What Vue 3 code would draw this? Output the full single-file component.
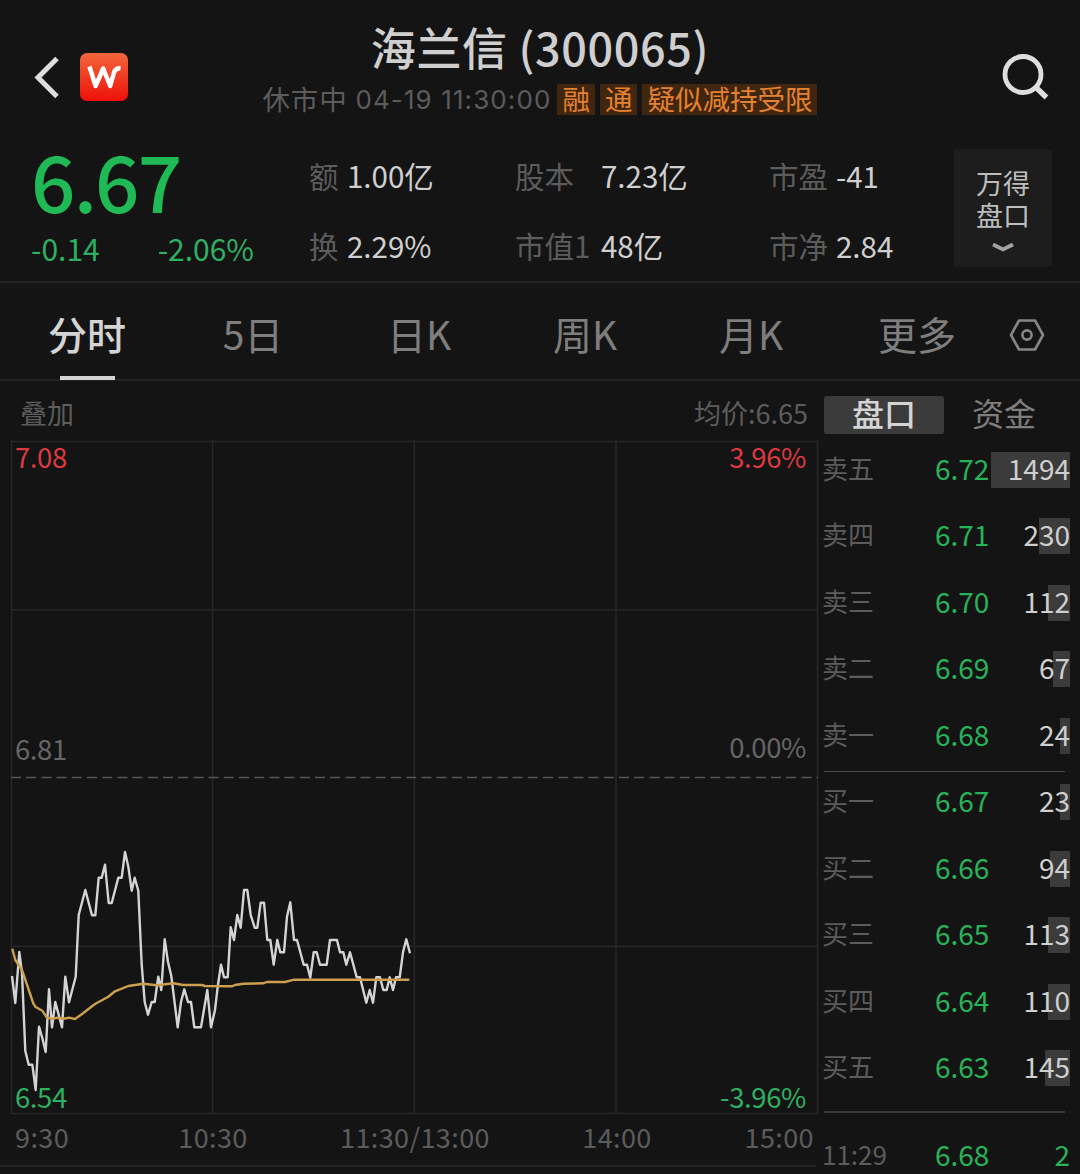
<template>
  <div class="page">
    <header class="header">
      <div class="header-left">
        <svg class="back" viewBox="0 0 26 44" width="26" height="44">
          <path d="M24 2.5 L5 21.5 L24 40.5" fill="none" stroke="#dedede" stroke-width="5" />
        </svg>
        <div class="logo">
          <svg viewBox="0 0 48 48" width="48" height="48">
            <path
              d="M9.5 13.5 L15.6 33 L23.2 15.5 L30.2 33 L34 19.5 Q35.4 14.8 40.5 15.2"
              fill="none"
              stroke="#fff"
              stroke-width="4.5"
              stroke-linejoin="round"
            />
          </svg>
        </div>
      </div>
      <div class="header-center">
        <h1 class="title">海兰信 (300065)</h1>
        <div class="subtitle">
          <span class="status">休市中</span>
          <span class="datetime">04-19 11:30:00</span>
          <span v-for="tag in tags" :key="tag" class="tag">{{ tag }}</span>
        </div>
      </div>
      <svg class="search" viewBox="0 0 48 48" width="48" height="48">
        <circle cx="21" cy="21.5" r="18" fill="none" stroke="#dedede" stroke-width="4.8" />
        <path d="M33.5 34 L44.5 44.5" stroke="#dedede" stroke-width="5.4" />
      </svg>
    </header>

    <section class="quote">
      <div class="price-box">
        <div class="price">6.67</div>
        <div class="change">
          <span>-0.14</span>
          <span>-2.06%</span>
        </div>
      </div>
      <div v-for="(col, i) in stats" :key="i" class="stat-col" :class="`col-${i}`">
        <div v-for="item in col" :key="item.label" class="stat">
          <span class="stat-label">{{ item.label }}</span>
          <span class="stat-value">{{ item.value }}</span>
        </div>
      </div>
      <div class="wind">
        <div class="wind-text">万得<br />盘口</div>
        <svg viewBox="0 0 22 12" width="22" height="12">
          <path d="M1 2.5 L11 7.5 L21 2.5" fill="none" stroke="#a2a2a2" stroke-width="3.8" />
        </svg>
      </div>
    </section>

    <nav class="tabs">
      <div
        v-for="tab in tabs"
        :key="tab"
        class="tab"
        :class="{ active: tab === activeTab }"
        @click="activeTab = tab"
      >
        <span>{{ tab }}</span>
      </div>
      <svg class="settings" viewBox="0 0 36 34" width="36" height="34">
        <path
          d="M10 2.5 H26 L34 17 L26 31.5 H10 L2 17 Z"
          fill="none"
          stroke="#868686"
          stroke-width="2.6"
          stroke-linejoin="round"
        />
        <circle cx="18" cy="17" r="4.6" fill="none" stroke="#868686" stroke-width="2.6" />
      </svg>
    </nav>

    <main class="main">
      <section class="chart-panel">
        <div class="chart-head">
          <span>叠加</span>
          <span>均价:6.65</span>
        </div>
        <div class="chart">
          <svg class="plot" viewBox="0 438 820 680" width="820" height="680">
            <g stroke="#272727" stroke-width="1.6">
              <line v-for="x in gridX" :key="'x' + x" :x1="x" y1="440" :x2="x" y2="1114" />
              <line v-for="y in gridY" :key="'y' + y" x1="11" :y1="y" x2="818" :y2="y" />
            </g>
            <line x1="11" y1="777.5" x2="818" y2="777.5" stroke="#565656" stroke-width="1.6" stroke-dasharray="10 5.2" />
            <polyline :points="toPoints(price)" fill="none" stroke="#d4d4d4" stroke-width="2.4" stroke-linejoin="round" />
            <polyline :points="toPoints(average)" fill="none" stroke="#cda04f" stroke-width="2.4" stroke-linejoin="round" />
          </svg>
          <div class="labels">
            <div class="label-row red"><span>7.08</span><span>3.96%</span></div>
            <div class="label-row mid"><span class="base">6.81</span><span>0.00%</span></div>
            <div class="label-row green"><span>6.54</span><span>-3.96%</span></div>
          </div>
        </div>
        <div class="axis">
          <span v-for="time in times" :key="time">{{ time }}</span>
        </div>
      </section>

      <aside class="book">
        <div class="book-tabs">
          <div class="book-tab selected">盘口</div>
          <div class="book-tab">资金</div>
        </div>
        <div v-for="row in sells" :key="row.label" class="row">
          <span class="row-label">{{ row.label }}</span>
          <span class="row-price">{{ row.price }}</span>
          <span class="row-qty"><i class="bar" :style="{ width: row.bar + 'px' }"></i>{{ row.qty }}</span>
        </div>
        <div class="divider"></div>
        <div v-for="row in buys" :key="row.label" class="row">
          <span class="row-label">{{ row.label }}</span>
          <span class="row-price">{{ row.price }}</span>
          <span class="row-qty"><i class="bar" :style="{ width: row.bar + 'px' }"></i>{{ row.qty }}</span>
        </div>
        <div class="divider last"></div>
        <div class="row trade">
          <span class="row-label">11:29</span>
          <span class="row-price">6.68</span>
          <span class="row-qty">2</span>
        </div>
      </aside>
    </main>
  </div>
</template>

<script setup>
import { ref } from 'vue';

const tags = ['融', '通', '疑似减持受限'];
const tabs = ['分时', '5日', '日K', '周K', '月K', '更多'];
const activeTab = ref('分时');
const times = ['9:30', '10:30', '11:30/13:00', '14:00', '15:00'];

const stats = [
  [
    { label: '额', value: '1.00亿' },
    { label: '换', value: '2.29%' },
  ],
  [
    { label: '股本', value: '7.23亿' },
    { label: '市值1', value: '48亿' },
  ],
  [
    { label: '市盈', value: '-41' },
    { label: '市净', value: '2.84' },
  ],
];

const sells = [
  { label: '卖五', price: '6.72', qty: 1494, bar: 79 },
  { label: '卖四', price: '6.71', qty: 230, bar: 31 },
  { label: '卖三', price: '6.70', qty: 112, bar: 22 },
  { label: '卖二', price: '6.69', qty: 67, bar: 17 },
  { label: '卖一', price: '6.68', qty: 24, bar: 10 },
];

const buys = [
  { label: '买一', price: '6.67', qty: 23, bar: 10 },
  { label: '买二', price: '6.66', qty: 94, bar: 20 },
  { label: '买三', price: '6.65', qty: 113, bar: 22 },
  { label: '买四', price: '6.64', qty: 110, bar: 22 },
  { label: '买五', price: '6.63', qty: 145, bar: 25 },
];

const gridX = [11.5, 212.5, 414.3, 616, 817.5];
const gridY = [441.5, 609.8, 946.3, 1113.5];

const price = [
  [12, 976], [15.3, 1003], [19.3, 952], [22, 973], [25.3, 1051], [28.7, 1064.7], [32.3, 1064.7], [35.7, 1090],
  [39, 1026.7], [42.3, 1038], [45.7, 1052], [49, 989.3], [52, 1027.3], [55.3, 1002], [62, 1027.3], [65.3, 976.7],
  [69, 1002.3], [75.7, 976.7], [78.7, 915], [85.3, 890], [92, 915.3], [95.3, 915.3], [98.7, 877.7], [101.7, 877.7],
  [105, 864.7], [108.7, 903], [111.7, 903], [118.3, 877.7], [121.7, 877.7], [125, 852], [128.3, 866.7], [131.7, 890.7],
  [134.7, 877.7], [138.3, 890.7], [141.7, 964.7], [144.7, 1002], [148, 1014.7], [151.7, 1002], [154.7, 1002],
  [158.3, 976.7], [161.3, 990], [164.7, 939.3], [168, 962], [171.3, 976], [177.7, 1027.3], [181, 1002], [184.3, 989.3],
  [188, 1002], [191, 1002], [194.3, 1027.3], [201, 1027.3], [207.3, 990], [211, 1027.3], [215, 1010], [217.7, 986.7],
  [221, 964.7], [224, 977.3], [227.7, 977.3], [230.7, 927.3], [234, 940], [237.3, 915], [240.7, 927.7], [244, 890],
  [247.3, 890], [250.7, 915], [254.7, 927.7], [257.3, 927.7], [260.7, 902.7], [264, 902.7], [267.3, 940], [270.3, 940],
  [273.7, 964.7], [277.3, 940], [280.3, 952.3], [284, 952.3], [287, 916.7], [290.3, 902.3], [294, 940], [297, 940],
  [303.7, 964.7], [307, 964.7], [310.3, 977.7], [313.7, 952.3], [316.7, 952.3], [320, 964.7], [326.7, 964.7],
  [330, 940], [337, 940], [340, 952.3], [343.3, 952.3], [346.3, 964.7], [350, 952.3], [356.7, 977.3], [360, 977.3],
  [366.3, 1002.7], [369.7, 990], [373, 1002.7], [376.3, 977.3], [380, 977.3], [383.3, 990], [386.7, 990],
  [389.7, 977.3], [393, 990], [396, 977.3], [399.7, 977.3], [403, 952.3], [406.3, 939.3], [410, 953.3],
];

const average = [
  [12.3, 948.7], [15.3, 960], [22, 970], [33.3, 1003.3], [35.3, 1006.7], [42.3, 1010.7], [46.7, 1017.3], [53.3, 1019],
  [56.7, 1017.7], [63.3, 1018.7], [69, 1017.7], [75, 1019], [81.7, 1014.3], [95, 1004], [108.3, 996.7], [115, 991.3],
  [128.3, 986], [143.3, 983.7], [156.7, 985.3], [173.3, 983.3], [183.3, 985], [201.7, 985], [205, 986], [231.7, 986.3],
  [235, 985], [243.3, 983.7], [263.3, 983.3], [266.7, 982], [285, 982], [293.3, 979.8], [409.3, 979.8],
];

const toPoints = (list) => list.map((p) => p.join(',')).join(' ');
</script>

<style>
body {
  background: #141414;
}
</style>

<style scoped>
.page {
  width: 1080px;
  height: 1174px;
  overflow: hidden;
  background: #141414;
  color: #cfcfcf;
  font-family: "Noto Sans CJK SC", "Noto Sans", sans-serif;
}

.header {
  height: 130px;
  display: grid;
  grid-template-columns: 240px 600px 240px;
}

.header-left {
  display: flex;
  align-items: flex-start;
  padding: 53px 0 0 33px;
}

.back {
  margin-top: 3px;
}

.logo {
  width: 48px;
  height: 48px;
  margin-left: 21px;
  border-radius: 7px;
  background: linear-gradient(#f4663c, #ee1008);
}

.header-center {
  display: flex;
  flex-direction: column;
  align-items: center;
}

.title {
  margin: 17px 0 0;
  height: 61px;
  line-height: 60px;
  font-size: 45px;
  font-weight: 500;
  letter-spacing: 0.6px;
  white-space: nowrap;
}

.subtitle {
  display: flex;
  align-items: center;
  margin-top: 6px;
  height: 31px;
  font-size: 27.5px;
  line-height: 28px;
  color: #5c5c5c;
  white-space: nowrap;
}

.status {
  height: 31px;
  letter-spacing: 0.8px;
}

.datetime {
  margin-left: 8px;
  margin-right: 6px;
  font-family: Inter, sans-serif;
  font-size: 26px;
  letter-spacing: 1.1px;
}

.tag {
  height: 31px;
  line-height: 29px;
  padding: 0 5px;
  margin-right: 5px;
  background: #41260f;
  color: #e5822f;
}

.tag:last-child {
  margin-right: 0;
}

.search {
  margin: 53px 0 0 162px;
}

.quote {
  height: 153px;
  box-sizing: border-box;
  border-bottom: 2px solid #242424;
  display: grid;
  grid-template-columns: 309px 206px 254px 185px 98px;
}

.price-box {
  padding-left: 31px;
  color: #1fba55;
}

.price {
  height: 92px;
  line-height: 98px;
  font-size: 78px;
  font-weight: 500;
  letter-spacing: -1.8px;
}

.change {
  display: flex;
  justify-content: space-between;
  width: 223px;
  height: 58px;
  line-height: 53px;
  font-size: 30px;
  color: #2eb063;
}

.stat-col {
  padding-top: 10px;
}

.stat {
  display: flex;
  height: 70px;
  line-height: 70px;
  font-size: 29.5px;
  white-space: nowrap;
}

.stat-label {
  width: 38px;
  color: #5c5c5c;
}

.col-1 .stat-label {
  width: 86px;
}

.col-2 .stat-label {
  width: 67px;
}

.wind {
  height: 118px;
  margin-top: 19px;
  box-sizing: border-box;
  padding-top: 18px;
  display: flex;
  flex-direction: column;
  align-items: center;
  background: #1d1d1d;
  border-radius: 3px;
}

.wind-text {
  font-size: 27px;
  line-height: 32px;
  color: #bdbdbd;
}

.wind svg {
  margin-top: 11px;
}

.tabs {
  height: 98px;
  box-sizing: border-box;
  border-bottom: 2px solid #242424;
  padding-left: 4px;
  display: grid;
  grid-template-columns: repeat(6, 166px) 1fr;
}

.tab {
  display: flex;
  flex-direction: column;
  align-items: center;
  justify-content: space-between;
  font-size: 39px;
  line-height: 101px;
  color: #7e7e7e;
}

.tab span {
  height: 90px;
}

.tab.active {
  color: #d4d4d4;
  font-weight: 500;
}

.tab.active::after {
  content: "";
  width: 55px;
  height: 4px;
  margin-bottom: -1px;
  background: #d4d4d4;
}

.settings {
  margin: 35px 0 0 9px;
}

.main {
  display: grid;
  grid-template-columns: 820px 250px;
}

.chart-head {
  display: flex;
  justify-content: space-between;
  height: 57px;
  line-height: 64px;
  padding: 0 12px 0 20px;
  font-size: 27px;
  color: #5c5c5c;
}

.chart {
  display: grid;
  height: 680px;
}

.plot,
.labels {
  grid-area: 1 / 1;
}

.labels {
  display: flex;
  flex-direction: column;
  padding: 0 14px 0 15px;
  font-size: 27.5px;
  line-height: 37px;
}

.label-row {
  display: flex;
  justify-content: space-between;
  height: 40px;
  letter-spacing: -0.4px;
}

.red {
  color: #dd3a40;
}

.mid {
  margin-top: 250px;
  color: #666;
}

.base {
  line-height: 41px;
}

.green {
  margin-top: 310px;
  color: #2eb063;
}

.axis {
  display: grid;
  grid-template-columns: 112px 202px 202px 202px 98px;
  justify-items: center;
  height: 49px;
  width: 816px;
  box-sizing: border-box;
  border-bottom: 2px solid #242424;
  font-size: 27px;
  line-height: 38px;
  letter-spacing: 0.4px;
  color: #5c5c5c;
}

.axis span:first-child {
  justify-self: start;
  padding-left: 15px;
}

.axis span:last-child {
  justify-self: end;
  padding-right: 2px;
}

.book-tabs {
  display: flex;
  height: 55.5px;
  box-sizing: border-box;
  padding: 15px 0 0 4px;
}

.book-tab {
  width: 120px;
  height: 38px;
  line-height: 33px;
  border-radius: 3px;
  text-align: center;
  font-size: 32px;
  color: #7e7e7e;
}

.book-tab.selected {
  background: #3b3b3b;
  color: #d4d4d4;
  font-weight: 500;
}

.row {
  display: grid;
  grid-template-columns: 113px 57px 1fr;
  align-items: center;
  height: 66.5px;
  padding-left: 2px;
  font-size: 28px;
  line-height: 32px;
}

.row-label,
.row-price,
.row-qty {
  height: 36px;
}

.row-label {
  font-size: 26px;
  color: #5c5c5c;
}

.row-price {
  color: #27b35a;
}

.row-qty {
  position: relative;
  text-align: right;
  z-index: 0;
}

.bar {
  position: absolute;
  right: 0;
  top: 0;
  height: 36px;
  background: #3b3b3b;
  z-index: -1;
}

.divider {
  height: 1px;
  margin: 2px 5px -3px 4px;
  background: #4c4c4c;
}

.divider.last {
  height: 2px;
  margin: 9px 5px 25px 4px;
  background: #383838;
}

.trade {
  height: 36px;
}

.trade .row-qty {
  color: #27b35a;
}
</style>
